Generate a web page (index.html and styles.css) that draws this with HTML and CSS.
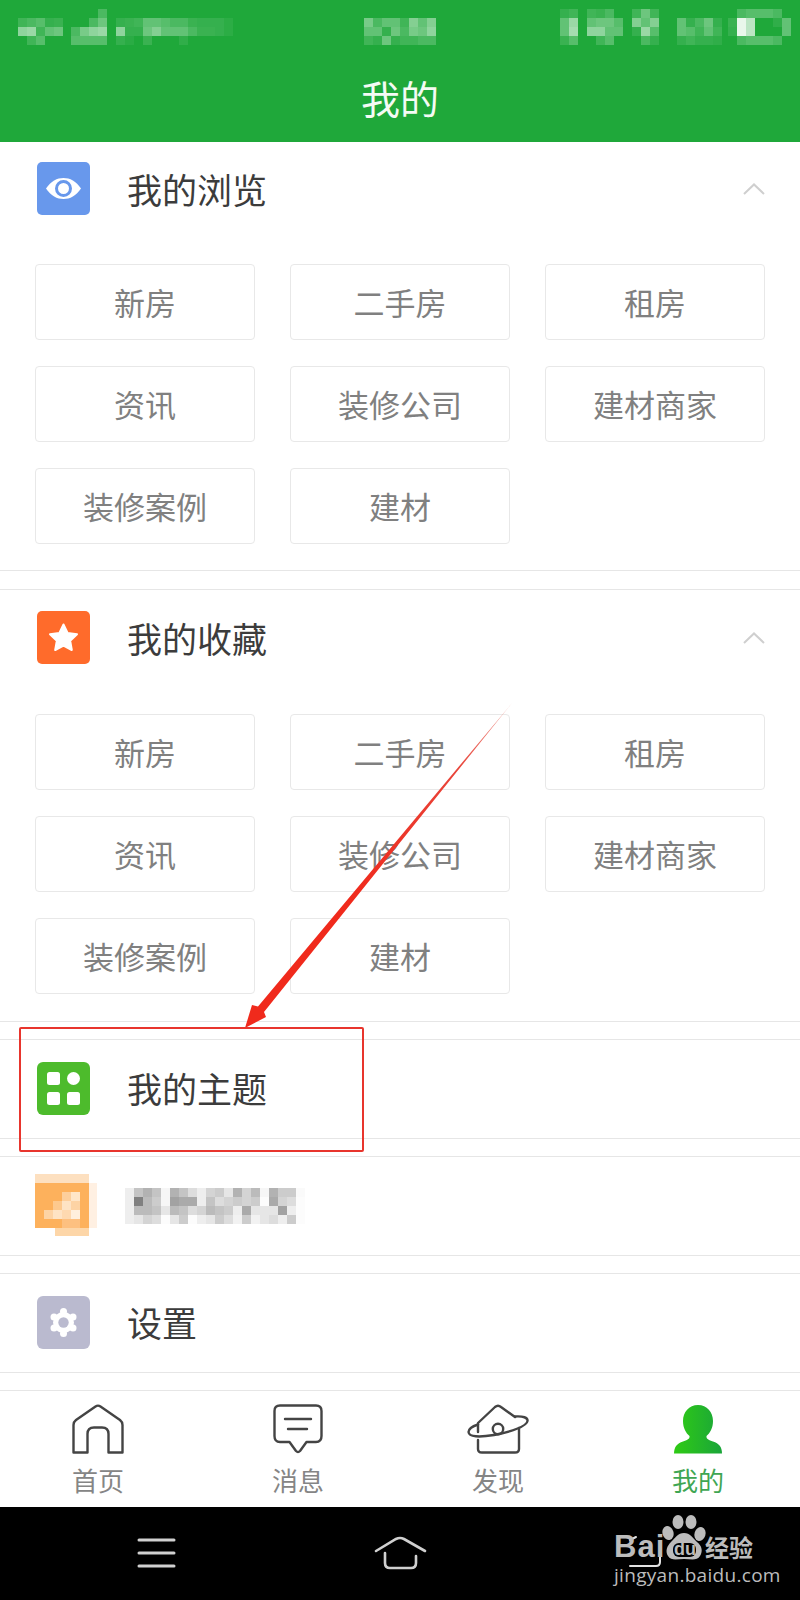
FILE: index.html
```html
<!DOCTYPE html>
<html lang="zh-CN">
<head>
<meta charset="utf-8">
<title>我的</title>
<link rel="stylesheet" href="styles.css">
</head>
<body>
<div class="page">
  <header class="header">
    <svg class="status mosaic" width="800" height="60" viewBox="0 0 800 60" fill="#fff">
      <rect x="98" y="9" fill-opacity=".2"/>
      <rect x="18" y="18" fill-opacity=".15"/><rect x="27" y="18" fill-opacity=".2"/><rect x="36" y="18" fill-opacity=".25"/><rect x="45" y="18" fill-opacity=".1"/><rect x="54" y="18" fill-opacity=".12"/><rect x="89" y="18" fill-opacity=".2"/><rect x="98" y="18" fill-opacity=".35"/><rect x="116" y="18" fill-opacity=".1"/><rect x="125" y="18" fill-opacity=".12"/><rect x="134" y="18" fill-opacity=".15"/><rect x="143" y="18" fill-opacity=".3"/><rect x="152" y="18" fill-opacity=".3"/><rect x="161" y="18" fill-opacity=".25"/><rect x="170" y="18" fill-opacity=".2"/><rect x="179" y="18" fill-opacity=".2"/><rect x="188" y="18" fill-opacity=".12"/><rect x="197" y="18" fill-opacity=".1"/><rect x="206" y="18" fill-opacity=".1"/><rect x="215" y="18" fill-opacity=".1"/><rect x="224" y="18" fill-opacity=".06"/>
      <rect x="18" y="27" fill-opacity=".5"/><rect x="27" y="27" fill-opacity=".55"/><rect x="36" y="27" fill-opacity=".15"/><rect x="45" y="27" fill-opacity=".3"/><rect x="54" y="27" fill-opacity=".35"/><rect x="71" y="27" fill-opacity=".2"/><rect x="80" y="27" fill-opacity=".4"/><rect x="89" y="27" fill-opacity=".5"/><rect x="98" y="27" fill-opacity=".55"/><rect x="116" y="27" fill-opacity=".5"/><rect x="125" y="27" fill-opacity=".1"/><rect x="134" y="27" fill-opacity=".1"/><rect x="143" y="27" fill-opacity=".35"/><rect x="152" y="27" fill-opacity=".45"/><rect x="161" y="27" fill-opacity=".3"/><rect x="170" y="27" fill-opacity=".3"/><rect x="179" y="27" fill-opacity=".3"/><rect x="188" y="27" fill-opacity=".2"/><rect x="197" y="27" fill-opacity=".12"/><rect x="206" y="27" fill-opacity=".12"/><rect x="215" y="27" fill-opacity=".1"/><rect x="224" y="27" fill-opacity=".06"/>
      <rect x="27" y="36" fill-opacity=".15"/><rect x="36" y="36" fill-opacity=".25"/><rect x="71" y="36" fill-opacity=".25"/><rect x="80" y="36" fill-opacity=".25"/><rect x="89" y="36" fill-opacity=".25"/><rect x="98" y="36" fill-opacity=".25"/><rect x="116" y="36" fill-opacity=".1"/><rect x="125" y="36" fill-opacity=".05"/><rect x="143" y="36" fill-opacity=".12"/><rect x="179" y="36" fill-opacity=".08"/>

      <rect x="364" y="18" fill-opacity=".4"/><rect x="373" y="18" fill-opacity=".2"/><rect x="382" y="18" fill-opacity=".3"/><rect x="391" y="18" fill-opacity=".3"/><rect x="400" y="18" fill-opacity=".15"/><rect x="409" y="18" fill-opacity=".45"/><rect x="418" y="18" fill-opacity=".3"/><rect x="427" y="18" fill-opacity=".45"/>
      <rect x="364" y="27" fill-opacity=".3"/><rect x="373" y="27" fill-opacity=".3"/><rect x="382" y="27" fill-opacity=".1"/><rect x="391" y="27" fill-opacity=".35"/><rect x="400" y="27" fill-opacity=".2"/><rect x="409" y="27" fill-opacity=".4"/><rect x="418" y="27" fill-opacity=".35"/><rect x="427" y="27" fill-opacity=".5"/>
      <rect x="364" y="36" fill-opacity=".15"/><rect x="373" y="36" fill-opacity=".1"/><rect x="382" y="36" fill-opacity=".35"/><rect x="391" y="36" fill-opacity=".1"/><rect x="400" y="36" fill-opacity=".15"/><rect x="409" y="36" fill-opacity=".15"/><rect x="418" y="36" fill-opacity=".2"/><rect x="427" y="36" fill-opacity=".2"/>

      <rect x="560" y="9" fill-opacity=".1"/><rect x="569" y="9" fill-opacity=".15"/><rect x="587" y="9" fill-opacity=".15"/><rect x="596" y="9" fill-opacity=".12"/><rect x="605" y="9" fill-opacity=".2"/><rect x="632" y="9" fill-opacity=".15"/><rect x="641" y="9" fill-opacity=".35"/><rect x="650" y="9" fill-opacity=".15"/><rect x="737" y="9" fill-opacity=".2"/><rect x="746" y="9" fill-opacity=".25"/><rect x="755" y="9" fill-opacity=".25"/><rect x="764" y="9" fill-opacity=".25"/><rect x="773" y="9" fill-opacity=".2"/>
      <rect x="560" y="18" fill-opacity=".3"/><rect x="569" y="18" fill-opacity=".55"/><rect x="587" y="18" fill-opacity=".3"/><rect x="596" y="18" fill-opacity=".35"/><rect x="605" y="18" fill-opacity=".35"/><rect x="614" y="18" fill-opacity=".25"/><rect x="632" y="18" fill-opacity=".45"/><rect x="641" y="18" fill-opacity=".3"/><rect x="650" y="18" fill-opacity=".45"/><rect x="677" y="18" fill-opacity=".3"/><rect x="686" y="18" fill-opacity=".1"/><rect x="695" y="18" fill-opacity=".2"/><rect x="704" y="18" fill-opacity=".35"/><rect x="713" y="18" fill-opacity=".1"/><rect x="728" y="18" fill-opacity=".12"/><rect x="737" y="18" fill-opacity=".9"/><rect x="746" y="18" fill-opacity=".7"/><rect x="773" y="18" fill-opacity=".08"/><rect x="782" y="18" fill-opacity=".3"/>
      <rect x="560" y="27" fill-opacity=".3"/><rect x="569" y="27" fill-opacity=".6"/><rect x="587" y="27" fill-opacity=".5"/><rect x="596" y="27" fill-opacity=".5"/><rect x="605" y="27" fill-opacity=".3"/><rect x="614" y="27" fill-opacity=".3"/><rect x="632" y="27" fill-opacity=".1"/><rect x="641" y="27" fill-opacity=".55"/><rect x="650" y="27" fill-opacity=".25"/><rect x="677" y="27" fill-opacity=".3"/><rect x="686" y="27" fill-opacity=".25"/><rect x="695" y="27" fill-opacity=".15"/><rect x="704" y="27" fill-opacity=".3"/><rect x="713" y="27" fill-opacity=".15"/><rect x="728" y="27" fill-opacity=".1"/><rect x="737" y="27" fill-opacity=".9"/><rect x="746" y="27" fill-opacity=".7"/><rect x="782" y="27" fill-opacity=".3"/>
      <rect x="560" y="36" fill-opacity=".12"/><rect x="569" y="36" fill-opacity=".25"/><rect x="596" y="36" fill-opacity=".15"/><rect x="605" y="36" fill-opacity=".25"/><rect x="641" y="36" fill-opacity=".2"/><rect x="650" y="36" fill-opacity=".1"/><rect x="677" y="36" fill-opacity=".1"/><rect x="686" y="36" fill-opacity=".15"/><rect x="695" y="36" fill-opacity=".1"/><rect x="704" y="36" fill-opacity=".1"/><rect x="713" y="36" fill-opacity=".08"/><rect x="737" y="36" fill-opacity=".2"/><rect x="746" y="36" fill-opacity=".25"/><rect x="755" y="36" fill-opacity=".25"/><rect x="764" y="36" fill-opacity=".25"/><rect x="773" y="36" fill-opacity=".2"/>
    </svg>
    <h1 class="header-title">我的</h1>
  </header>

  <section class="panel panel-first">
    <div class="panel-head">
      <svg class="tile" viewBox="0 0 53 53">
        <rect width="53" height="53" rx="5" fill="#6898ec"/>
        <path d="M9 26.500C14 19 20 16 26.500 16S39 19 44 26.500C39 34 33 37 26.500 37S14 34 9 26.500Z" fill="#fff"/>
        <circle cx="26.500" cy="26.500" r="7" fill="none" stroke="#6898ec" stroke-width="3"/>
      </svg>
      <span class="panel-title">我的浏览</span>
      <svg class="chev" width="22" height="12" viewBox="0 0 22 12"><path d="M1 11 11 1.500 21 11" fill="none" stroke="#cfcfcf" stroke-width="2"/></svg>
    </div>
    <div class="chips">
      <div class="chip">新房</div><div class="chip">二手房</div><div class="chip">租房</div>
      <div class="chip">资讯</div><div class="chip">装修公司</div><div class="chip">建材商家</div>
      <div class="chip">装修案例</div><div class="chip">建材</div>
    </div>
  </section>

  <section class="panel">
    <div class="panel-head">
      <svg class="tile" viewBox="0 0 53 53">
        <rect width="53" height="53" rx="5" fill="#ff6b2b"/>
        <path d="M26.500 13.500 30.600 22 40 23.300 33.200 29.800 34.800 39 26.500 34.600 18.200 39 19.800 29.800 13 23.300 22.400 22Z" fill="#fff" stroke="#fff" stroke-width="2" stroke-linejoin="round"/>
      </svg>
      <span class="panel-title">我的收藏</span>
      <svg class="chev" width="22" height="12" viewBox="0 0 22 12"><path d="M1 11 11 1.500 21 11" fill="none" stroke="#cfcfcf" stroke-width="2"/></svg>
    </div>
    <div class="chips chips-tail">
      <div class="chip">新房</div><div class="chip">二手房</div><div class="chip">租房</div>
      <div class="chip">资讯</div><div class="chip">装修公司</div><div class="chip">建材商家</div>
      <div class="chip">装修案例</div><div class="chip">建材</div>
    </div>
  </section>

  <section class="row">
    <svg class="tile" viewBox="0 0 53 53">
      <rect width="53" height="53" rx="6" fill="#4dbb2c"/>
      <rect x="10" y="10" width="13" height="13" rx="2.500" fill="#fff"/>
      <circle cx="36.500" cy="16.500" r="6.500" fill="#fff"/>
      <rect x="10" y="30" width="13" height="13" rx="2.500" fill="#fff"/>
      <rect x="30" y="30" width="13" height="13" rx="2.500" fill="#fff"/>
    </svg>
    <span class="panel-title">我的主题</span>
  </section>

  <section class="row">
    <svg class="tile-blur" width="64" height="64" viewBox="0 0 64 64">
      <rect x="0" y="1" width="54" height="9" fill="#fde0c0"/>
      <rect x="0" y="10" width="54" height="45" fill="#fdb15c"/>
      <rect x="54" y="10" width="8" height="45" fill="#fff0e2"/>
      <rect x="20" y="55" width="34" height="8" fill="#fdd6a8"/>
      <rect x="27" y="19" width="9" height="9" fill="#fdcf9c"/><rect x="36" y="19" width="9" height="9" fill="#ffe6c8"/>
      <rect x="18" y="28" width="9" height="9" fill="#fdc98e"/><rect x="27" y="28" width="9" height="9" fill="#fee3c4"/><rect x="36" y="28" width="9" height="9" fill="#fdd3a4"/>
      <rect x="9" y="37" width="9" height="9" fill="#fdd3a4"/><rect x="18" y="37" width="9" height="9" fill="#fee3c4"/><rect x="27" y="37" width="9" height="9" fill="#fed9b0"/><rect x="36" y="37" width="9" height="9" fill="#ffefdd"/>
      <rect x="27" y="46" width="18" height="9" fill="#fdc080"/>
    </svg>
    <svg class="name-blur mosaic" width="186" height="36" viewBox="125 1191 186 36" fill="#555">
      <rect x="125" y="1191" fill-opacity=".1"/><rect x="134" y="1191" fill-opacity=".35"/><rect x="143" y="1191" fill-opacity=".45"/><rect x="152" y="1191" fill-opacity=".35"/><rect x="161" y="1191" fill-opacity=".05"/><rect x="170" y="1191" fill-opacity=".45"/><rect x="179" y="1191" fill-opacity=".35"/><rect x="188" y="1191" fill-opacity=".2"/><rect x="197" y="1191" fill-opacity=".1"/><rect x="206" y="1191" fill-opacity=".25"/><rect x="215" y="1191" fill-opacity=".3"/><rect x="224" y="1191" fill-opacity=".15"/><rect x="233" y="1191" fill-opacity=".45"/><rect x="242" y="1191" fill-opacity=".25"/><rect x="251" y="1191" fill-opacity=".4"/><rect x="260" y="1191" fill-opacity=".05"/><rect x="269" y="1191" fill-opacity=".45"/><rect x="278" y="1191" fill-opacity=".3"/><rect x="287" y="1191" fill-opacity=".3"/><rect x="296" y="1191" fill-opacity=".03"/>
      <rect x="125" y="1200" fill-opacity=".1"/><rect x="134" y="1200" fill-opacity=".75"/><rect x="143" y="1200" fill-opacity=".4"/><rect x="152" y="1200" fill-opacity=".3"/><rect x="161" y="1200" fill-opacity=".05"/><rect x="170" y="1200" fill-opacity=".55"/><rect x="179" y="1200" fill-opacity=".5"/><rect x="188" y="1200" fill-opacity=".5"/><rect x="197" y="1200" fill-opacity=".1"/><rect x="206" y="1200" fill-opacity=".35"/><rect x="215" y="1200" fill-opacity=".2"/><rect x="224" y="1200" fill-opacity=".25"/><rect x="233" y="1200" fill-opacity=".3"/><rect x="242" y="1200" fill-opacity=".25"/><rect x="251" y="1200" fill-opacity=".3"/><rect x="260" y="1200" fill-opacity=".02"/><rect x="269" y="1200" fill-opacity=".5"/><rect x="278" y="1200" fill-opacity=".25"/><rect x="287" y="1200" fill-opacity=".2"/><rect x="296" y="1200" fill-opacity=".02"/>
      <rect x="125" y="1209" fill-opacity=".1"/><rect x="134" y="1209" fill-opacity=".4"/><rect x="143" y="1209" fill-opacity=".4"/><rect x="152" y="1209" fill-opacity=".35"/><rect x="161" y="1209" fill-opacity=".15"/><rect x="170" y="1209" fill-opacity=".4"/><rect x="179" y="1209" fill-opacity=".35"/><rect x="188" y="1209" fill-opacity=".2"/><rect x="197" y="1209" fill-opacity=".25"/><rect x="206" y="1209" fill-opacity=".4"/><rect x="215" y="1209" fill-opacity=".35"/><rect x="224" y="1209" fill-opacity=".3"/><rect x="233" y="1209" fill-opacity=".1"/><rect x="242" y="1209" fill-opacity=".5"/><rect x="251" y="1209" fill-opacity=".15"/><rect x="260" y="1209" fill-opacity=".15"/><rect x="269" y="1209" fill-opacity=".15"/><rect x="278" y="1209" fill-opacity=".55"/><rect x="287" y="1209" fill-opacity=".1"/><rect x="296" y="1209" fill-opacity=".02"/>
      <rect x="125" y="1218" fill-opacity=".1"/><rect x="134" y="1218" fill-opacity=".15"/><rect x="143" y="1218" fill-opacity=".25"/><rect x="152" y="1218" fill-opacity=".2"/><rect x="161" y="1218" fill-opacity=".02"/><rect x="170" y="1218" fill-opacity=".15"/><rect x="179" y="1218" fill-opacity=".3"/><rect x="188" y="1218" fill-opacity=".02"/><rect x="197" y="1218" fill-opacity=".1"/><rect x="206" y="1218" fill-opacity=".15"/><rect x="215" y="1218" fill-opacity=".3"/><rect x="224" y="1218" fill-opacity=".2"/><rect x="233" y="1218" fill-opacity=".08"/><rect x="242" y="1218" fill-opacity=".3"/><rect x="251" y="1218" fill-opacity=".08"/><rect x="260" y="1218" fill-opacity=".15"/><rect x="269" y="1218" fill-opacity=".2"/><rect x="278" y="1218" fill-opacity=".1"/><rect x="287" y="1218" fill-opacity=".3"/><rect x="296" y="1218" fill-opacity=".02"/>
    </svg>
  </section>

  <section class="row">
    <svg class="tile" viewBox="0 0 53 53">
      <rect width="53" height="53" rx="6" fill="#babacf"/>
      <g fill="#fff">
        <circle cx="26.500" cy="26.500" r="10.500"/>
        <circle cx="26.500" cy="15.500" r="3.500"/><circle cx="26.500" cy="37.500" r="3.500"/>
        <circle cx="17" cy="21" r="3.500"/><circle cx="36" cy="21" r="3.500"/>
        <circle cx="17" cy="32" r="3.500"/><circle cx="36" cy="32" r="3.500"/>
      </g>
      <circle cx="26.500" cy="26.500" r="5.200" fill="#babacf"/>
    </svg>
    <span class="panel-title">设置</span>
  </section>

  <nav class="tabs">
    <div class="tab">
      <svg class="tab-icon" width="52" height="50" viewBox="0 0 52 50" fill="none" stroke="#444" stroke-width="2.400" stroke-linejoin="round">
        <path d="M1.500 48.500V21Q1.500 18 4 16L23.500 2.500Q26 .8 28.500 2.500L48 16Q50.500 18 50.500 21V48.500H36.500V30Q36.500 23.500 30 23.500H22Q15.500 23.500 15.500 30V48.500Z"/>
      </svg>
      <span class="tab-label">首页</span>
    </div>
    <div class="tab">
      <svg class="tab-icon" width="52" height="50" viewBox="0 0 52 50" fill="none" stroke="#444" stroke-width="2.400" stroke-linejoin="round" stroke-linecap="round">
        <path d="M8 1.500H44Q49.500 1.500 49.500 7V32Q49.500 38 44 38H34.500L28 47Q26 49 24 47L17.500 38H8Q2.500 38 2.500 32V7Q2.500 1.500 8 1.500Z"/>
        <path d="M13 15H39M16 25H35"/>
      </svg>
      <span class="tab-label">消息</span>
    </div>
    <div class="tab">
      <svg class="tab-icon" width="62" height="50" viewBox="0 0 62 50" fill="none" stroke="#444" stroke-width="2.400" stroke-linecap="round" stroke-linejoin="round">
        <path d="M11 36V45Q11 48.500 15 48.500H48Q52 48.500 52 45V24"/>
        <path d="M11 28V19L28 3Q31 .5 34 3L48 13"/>
        <path d="M48 12.500C56 12 61 13.500 60.500 17 60 22 44 28 27 31 12 33.500 2 33 1.500 28 1.500 25 5 22.500 11 20.500"/>
        <circle cx="31" cy="25" r="5.200"/>
      </svg>
      <span class="tab-label">发现</span>
    </div>
    <div class="tab tab-active">
      <svg class="tab-icon" width="52" height="50" viewBox="0 0 52 50">
        <defs><linearGradient id="userGrad" x1="0" x2="1"><stop offset="0" stop-color="#2fcb14"/><stop offset="1" stop-color="#1aa53a"/></linearGradient></defs>
        <path d="M26 1C35 1 41 8 41 17 41 24 38 29 34.500 32 34 35 37 36 41 37.500 47 39.500 50 43 50 49.500H2C2 43 5 39.500 11 37.500 15 36 18 35 17.500 32 14 29 11 24 11 17 11 8 17 1 26 1Z" fill="url(#userGrad)"/>
      </svg>
      <span class="tab-label">我的</span>
    </div>
  </nav>

  <div class="sysbar">
    <svg width="800" height="93" viewBox="0 1507 800 93" fill="none" stroke="#d0d0d0" stroke-width="3" stroke-linecap="round">
      <path d="M139 1540H174M139 1553H174M139 1566H174"/>
      <path d="M376 1551 396 1539Q400 1537 404 1539L425 1551" stroke-width="2.600"/>
      <path d="M385 1553V1563Q385 1568 390 1568H411Q416 1568 416 1563V1556" stroke-width="2.600"/>
      <path d="M630 1566H656Q660 1566 660 1562V1547M630 1540 636 1537" stroke="#e2e2e2" stroke-width="2"/>
    </svg>
  </div>

  <div class="logo">
    <span class="logo-bai">Bai</span>
    <svg class="logo-paw" width="46" height="50" viewBox="0 0 46 50" fill="#bcbcbc">
      <ellipse cx="6" cy="19" rx="5.500" ry="7" transform="rotate(-18 6 19)"/>
      <ellipse cx="16" cy="8" rx="5.500" ry="7"/>
      <ellipse cx="29" cy="8" rx="5.500" ry="7"/>
      <ellipse cx="38" cy="20" rx="5.500" ry="7" transform="rotate(18 38 20)"/>
      <path d="M22 19C28 19 31 24 35 28 40 32 41 37 38 42 35 47 29 45 22 45 15 45 9 47 6 42 3 37 5 32 9 28 13 24 16 19 22 19Z"/>
      <rect x="11" y="29" width="23" height="14" rx="6" fill="#000"/>
    </svg>
    <span class="logo-du">du</span>
    <span class="logo-jy">经验</span>
    <span class="logo-url">jingyan.baidu.com</span>
  </div>

  <svg class="annot" width="800" height="1600" viewBox="0 0 800 1600">
    <defs><linearGradient id="arrowGrad" gradientUnits="userSpaceOnUse" x1="512" y1="703" x2="245" y2="1028"><stop offset="0" stop-color="#f0a098"/><stop offset=".2" stop-color="#e8453a"/><stop offset=".6" stop-color="#f02a1c"/></linearGradient></defs>
    <polygon points="512,703 264,1012 266,1017 245,1028 252,1005 258,1006.500" fill="url(#arrowGrad)"/>
  </svg>
  <div class="redbox"></div>
</div>
</body>
</html>
```

FILE: styles.css
```css
* { box-sizing: border-box; }
html, body { margin: 0; padding: 0; background: #fff; }
.page {
  position: relative;
  width: 800px;
  height: 1600px;
  overflow: hidden;
  display: flex;
  flex-direction: column;
  font-family: "Noto Sans CJK SC", "Noto Sans", sans-serif;
  background: #fff;
}
.mosaic { filter: blur(.6px); }
.mosaic rect { width: 9px; height: 9px; }

.header { height: 142px; flex: none; background: #1fa83a; }
.status { display: block; }
.header-title {
  margin: 0;
  height: 74px;
  line-height: 74px;
  text-align: center;
  font-size: 39px;
  font-weight: 400;
  color: #f4fbf4;
}

.panel { flex: none; padding-top: 21px; border-top: 1px solid #e6e6e6; border-bottom: 1px solid #e6e6e6; margin-bottom: 17px; }
.panel-first { padding-top: 20px; border-top: 0; margin-bottom: 18px; }
.panel-head { display: flex; align-items: center; height: 53px; padding-left: 37px; padding-right: 35px; }
.tile { display: block; width: 53px; height: 53px; flex: none; }
.panel-title { margin-left: 37px; margin-top: -1px; font-size: 35px; line-height: 53px; color: #3c3c3c; }
.chev { margin-left: auto; }

.chips {
  display: grid;
  grid-template-columns: repeat(3, 220px);
  column-gap: 35px;
  row-gap: 26px;
  padding: 49px 35px 26px 35px;
}
.chips-tail { padding-top: 50px; padding-bottom: 27px; }
.chip {
  height: 76px;
  padding-bottom: 2px;
  border: 1px solid #e8e8e8;
  border-radius: 4px;
  display: flex;
  align-items: center;
  justify-content: center;
  font-size: 31px;
  color: #808080;
}

.row {
  flex: none;
  display: flex;
  align-items: center;
  height: 100px;
  padding-left: 37px;
  padding-bottom: 2px;
  border-top: 1px solid #e6e6e6;
  border-bottom: 1px solid #e6e6e6;
  margin-bottom: 17px;
}
.tile-blur { flex: none; margin-left: -2px; filter: blur(.6px); }
.name-blur { flex: none; margin-left: 26px; margin-top: 2px; }

.tabs {
  flex: none;
  height: 117px;
  display: grid;
  grid-template-columns: repeat(4, 200px);
  border-top: 1px solid #e6e6e6;
  background: #fff;
}
.tab { display: flex; flex-direction: column; align-items: center; padding-top: 13px; padding-right: 4px; }
.tab-icon { display: block; flex: none; }
.tab-label { font-size: 26px; line-height: 36px; margin-top: 8px; color: #858585; }
.tab-active .tab-label { color: #3fa653; }

.sysbar { flex: none; height: 93px; background: #000; }
.sysbar svg { display: block; }

.logo { position: absolute; left: 0; top: 0; width: 800px; height: 1600px; color: #bcbcbc; pointer-events: none; font-family: "Liberation Sans", sans-serif; }
.logo span { position: absolute; white-space: nowrap; }
.logo-bai { left: 614px; top: 1533px; font-size: 31px; line-height: 28px; font-weight: 700; letter-spacing: 1px; }
.logo-paw { position: absolute; left: 662px; top: 1514px; }
.logo-du { left: 674px; top: 1540px; font-size: 18px; line-height: 18px; font-weight: 700; }
.logo-jy { left: 705px; top: 1533px; font-family: "Noto Sans CJK SC", sans-serif; font-size: 24px; line-height: 28px; font-weight: 700; }
.logo-url { left: 614px; top: 1564px; font-family: "Open Sans", sans-serif; font-size: 19px; line-height: 22px; letter-spacing: .3px; }

.annot { position: absolute; left: 0; top: 0; pointer-events: none; }
.redbox {
  position: absolute;
  left: 19px;
  top: 1027px;
  width: 345px;
  height: 125px;
  border: 2px solid #e8352d;
  border-radius: 2px;
}
```
